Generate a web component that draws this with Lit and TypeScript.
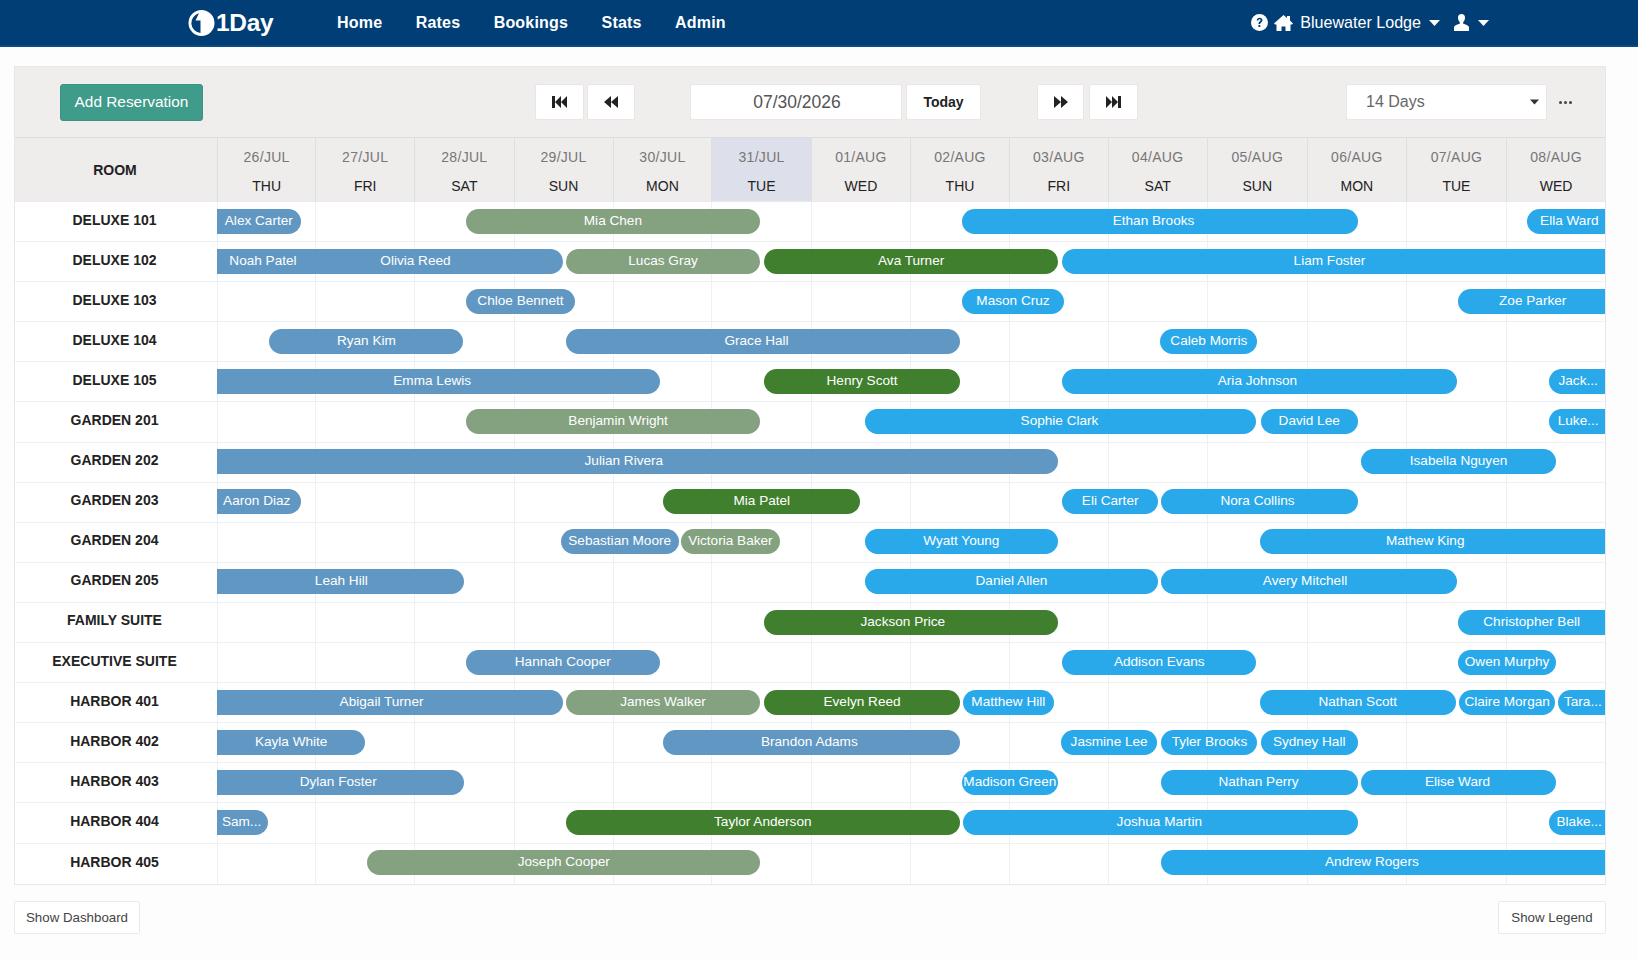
import { LitElement, html, css, svg } from "lit";
import { customElement } from "lit/decorators.js";

const K = 1638 / 1568;
const LANE = 208;
type Bar = [string, number, number, string, number?];
// colour: b slate blue, s sage, g green, c bright blue. flag: 1 open left, 2 open right
const ROWS: [string, Bar[]][] = [
  ["DELUXE 101", [["Alex Carter", 208, 288, "b", 1], ["Mia Chen", 446, 728, "s"], ["Ethan Brooks", 921, 1300, "c"], ["Ella Ward", 1462, 1537, "c", 2]]],
  ["DELUXE 102", [["Olivia Reed", 257, 539, "b"], ["Noah Patel", 208, 296, "b", 3], ["Lucas Gray", 542, 728, "s"], ["Ava Turner", 732, 1013, "g"], ["Liam Foster", 1017, 1537, "c", 2]]],
  ["DELUXE 103", [["Chloe Bennett", 446, 551, "b"], ["Mason Cruz", 921, 1019, "c"], ["Zoe Parker", 1396, 1537, "c", 2]]],
  ["DELUXE 104", [["Ryan Kim", 258, 444, "b"], ["Grace Hall", 542, 919, "b"], ["Caleb Morris", 1111, 1204, "c"]]],
  ["DELUXE 105", [["Emma Lewis", 208, 632, "b", 1], ["Henry Scott", 732, 919, "g"], ["Aria Johnson", 1017, 1395, "c"], ["Jack...", 1483, 1537, "c", 2]]],
  ["GARDEN 201", [["Benjamin Wright", 446, 728, "s"], ["Sophie Clark", 828, 1203, "c"], ["David Lee", 1207, 1300, "c"], ["Luke...", 1483, 1537, "c", 2]]],
  ["GARDEN 202", [["Julian Rivera", 208, 1013, "b", 1], ["Isabella Nguyen", 1303, 1490, "c"]]],
  ["GARDEN 203", [["Aaron Diaz", 208, 288, "b", 1], ["Mia Patel", 635, 824, "g"], ["Eli Carter", 1017, 1109, "c"], ["Nora Collins", 1112, 1300, "c"]]],
  ["GARDEN 204", [["Sebastian Moore", 537, 650, "b"], ["Victoria Baker", 652, 747, "s"], ["Wyatt Young", 828, 1013, "c"], ["Mathew King", 1206, 1537, "c", 2]]],
  ["GARDEN 205", [["Leah Hill", 208, 444, "b", 1], ["Daniel Allen", 828, 1109, "c"], ["Avery Mitchell", 1112, 1395, "c"]]],
  ["FAMILY SUITE", [["Jackson Price", 732, 1013, "g"], ["Christopher Bell", 1396, 1537, "c", 2]]],
  ["EXECUTIVE SUITE", [["Hannah Cooper", 446, 632, "b"], ["Addison Evans", 1017, 1203, "c"], ["Owen Murphy", 1396, 1490, "c"]]],
  ["HARBOR 401", [["Abigail Turner", 208, 539, "b", 1], ["James Walker", 542, 728, "s"], ["Evelyn Reed", 732, 919, "g"], ["Matthew Hill", 922, 1009, "c"], ["Nathan Scott", 1206, 1394, "c"], ["Claire Morgan", 1397, 1489, "c"], ["Tara...", 1492, 1537, "c", 2]]],
  ["HARBOR 402", [["Kayla White", 208, 350, "b", 1], ["Brandon Adams", 635, 919, "b"], ["Jasmine Lee", 1016, 1108, "c"], ["Tyler Brooks", 1112, 1204, "c"], ["Sydney Hall", 1207, 1300, "c"]]],
  ["HARBOR 403", [["Dylan Foster", 208, 444, "b", 1], ["Madison Green", 921, 1013, "c"], ["Nathan Perry", 1112, 1300, "c"], ["Elise Ward", 1303, 1490, "c"]]],
  ["HARBOR 404", [["Sam...", 208, 257, "b", 1], ["Taylor Anderson", 542, 919, "g"], ["Joshua Martin", 922, 1300, "c"], ["Blake...", 1483, 1537, "c", 2]]],
  ["HARBOR 405", [["Joseph Cooper", 352, 728, "s"], ["Andrew Rogers", 1112, 1537, "c", 2]]],
];
// how far a label sits from the centre of its bar, in pixels
const NUDGE: Record<string, number> = {
  "Ethan Brooks": -6, "Ella Ward": 3, "Liam Foster": -4, "Zoe Parker": 1, "Grace Hall": -6, "Emma Lewis": -6, "Aria Johnson": -2,
  "Benjamin Wright": 5, "Julian Rivera": -13, "Aaron Diaz": -2, "Nora Collins": -2, "Mathew King": -7, "Leah Hill": 1, "Avery Mitchell": -4,
  "Jackson Price": -8, "Abigail Turner": -8, "Brandon Adams": -2, "Dylan Foster": -2, "Sam...": -1, "Andrew Rogers": -11, "Blake...": 2,
  "Jack...": 1, "Luke...": 1, "Tara...": 1, "Sophie Clark": -1, "Nathan Perry": -1, "Elise Ward": -1, "Joshua Martin": -1,
};
const DAYS = [
  ["26/JUL", "THU"], ["27/JUL", "FRI"], ["28/JUL", "SAT"], ["29/JUL", "SUN"], ["30/JUL", "MON"], ["31/JUL", "TUE"], ["01/AUG", "WED"],
  ["02/AUG", "THU"], ["03/AUG", "FRI"], ["04/AUG", "SAT"], ["05/AUG", "SUN"], ["06/AUG", "MON"], ["07/AUG", "TUE"], ["08/AUG", "WED"],
];

const icon = (w: number, h: number, vb: string, body: unknown) =>
  html`<svg class="ic" width=${w} height=${h} viewBox=${vb} fill="currentColor">${body}</svg>`;
const first = icon(15, 12, "0 0 15 12", svg`<rect x="0" y="0" width="3" height="12"/><path d="M3 6 9 0v12zM9 6l6-6v12z"/>`);
const prev = icon(14, 12, "0 0 14 12", svg`<path d="M0 6 7 0v12zM7 6l7-6v12z"/>`);
const next = icon(14, 12, "0 0 14 12", svg`<path d="M14 6 7 0v12zM7 6 0 0v12z"/>`);
const last = icon(15, 12, "0 0 15 12", svg`<rect x="12" y="0" width="3" height="12"/><path d="M12 6 6 0v12zM6 6 0 0v12z"/>`);
const caret = icon(11, 6, "0 0 11 6", svg`<path d="M0 0h11L5.500 6z"/>`);

@customElement("app-root")
export class AppRoot extends LitElement {
  static styles = css`
    :host { display: block; width: 1638px; height: 960px; background: #fdfdfd; font-family: "Liberation Sans", Arial, sans-serif; color: #222; overflow: hidden; }
    .ic { display: block; flex: none; }
    .nav { height: 45px; background: #003e75; border-bottom: 2px solid #0b4a7f; display: flex; align-items: center; color: #fff; font-size: 16px; }
    .logo { display: flex; align-items: center; margin-left: 188px; width: 149px; font-size: 24.5px; font-weight: 700; letter-spacing: -0.3px; gap: 1px; }
    .links { display: flex; gap: 33.4px; font-weight: 700; font-size: 16px; letter-spacing: 0.2px; }
    .right { margin-left: auto; margin-right: 149px; display: flex; align-items: center; }
    .help { margin-right: 6px; }
    .house { margin-right: 7px; }
    .lodge { margin-right: 8px; font-size: 16.1px; }
    .user { margin-left: 14px; margin-right: 9px; }
    .panel { margin: 19px 32px 0 14px; border: 1px solid #e6e6ec; height: 819px; box-sizing: border-box; }
    .toolbar { height: 71px; background: #f0eded; border-bottom: 1px solid #dcdbdf; display: flex; align-items: center; box-sizing: border-box; padding-left: 45px; }
    .btn { height: 36px; background: #fff; border: 1px solid #e8e6e6; box-sizing: border-box; display: flex; align-items: center; justify-content: center; border-radius: 2px; color: #222; }
    .add { width: 143px; height: 37px; background: #3f9b8a; border-color: #3a9383; color: #fff; font-size: 15.4px; border-radius: 3px; margin-right: 332px; }
    .n1 { width: 49px; margin-right: 3px; }
    .n2 { width: 48px; margin-right: 55px; }
    .date { width: 212px; font-size: 17.5px; color: #555; margin-right: 4px; padding-left: 2px; }
    .today { width: 75px; font-size: 14px; font-weight: 700; margin-right: 56px; }
    .n3 { width: 47px; margin-right: 5px; }
    .n4 { width: 49px; margin-right: 208px; }
    .sel { width: 201px; justify-content: space-between; padding: 0 7px 0 19px; font-size: 16px; color: #666; }
    .sel .ic { color: #333; width: 9px; }
    .dots { margin-left: 12px; display: flex; gap: 2px; }
    .dots i { width: 3px; height: 3px; border-radius: 50%; background: #444; display: block; }
    .head { display: grid; grid-template-columns: 202px 98.3fr 99fr 99.5fr 99fr 98.9fr 99.5fr 99.4fr 98.9fr 98.9fr 98.9fr 100.5fr 98.8fr 100.5fr 98.9fr; height: 64px; background: #efecec; border-bottom: 1px solid #e9e8ec; box-sizing: border-box; }
    .rh { display: flex; align-items: center; justify-content: center; font-size: 14px; font-weight: 700; padding: 1px 2px 0 0; box-sizing: border-box; }
    .dh { border-left: 1px solid #dfdfe3; text-align: center; font-size: 14px; display: flex; flex-direction: column; align-items: center; padding-top: 10px; box-sizing: border-box; gap: 10px; line-height: 19px; }
    .dh.now { background: #dde0ea; }
    .dh b { font-weight: 400; color: #777; letter-spacing: 0.3px; }
    .dh span { color: #222; }
    .row { display: grid; grid-template-columns: 202px 1fr; height: 40.1px; border-bottom: 1px solid #eff0f4; box-sizing: border-box; background: #fff; }
    .row:last-child { border-bottom: 0; }
    .room { display: flex; align-items: center; justify-content: center; font-size: 14px; font-weight: 700; padding: 0 3px 4px 0; box-sizing: border-box; }
    .lane { position: relative; display: grid; grid-template-columns: 98.3fr 99fr 99.5fr 99fr 98.9fr 99.5fr 99.4fr 98.9fr 98.9fr 98.9fr 100.5fr 98.8fr 100.5fr 98.9fr; }
    .cell { border-left: 1px solid #eff0f4; }
    .bar { position: absolute; top: 6.6px; height: 25px; box-sizing: border-box; border-radius: 13px; color: #fff; font-size: 13.6px; line-height: 24px; text-align: center; white-space: nowrap; overflow: hidden; }
    .b { background: #6198c3; }
    .s { background: #84a180; }
    .g { background: #3f7f2e; }
    .c { background: #29a9ea; }
    .ol { border-top-left-radius: 0; border-bottom-left-radius: 0; }
    .or { border-top-right-radius: 0; border-bottom-right-radius: 0; }
    .foot { margin: 16px 32px 0 14px; display: flex; justify-content: space-between; }
    .fb { height: 33px; background: #fff; border: 1px solid #e8e9ee; border-radius: 2px; box-sizing: border-box; display: flex; align-items: center; justify-content: center; font-size: 13.3px; color: #444; }
    .fb.d { width: 126px; }
    .fb.l { width: 108px; }
  `;

  render() {
    return html`
      <div class="nav">
        <div class="logo">
          <svg class="ic" width="27" height="26" viewBox="0 0 27 26"><path fill="#fff" fill-rule="evenodd" d="M13.500 0a13 13 0 1 1 0 26 13 13 0 0 1 0-26zM11 3.300A10 10 0 0 0 12.500 23V10.500H7.500z"/></svg>
          <span>1Day</span>
        </div>
        <div class="links"><span>Home</span><span>Rates</span><span>Bookings</span><span>Stats</span><span>Admin</span></div>
        <div class="right">
          <svg class="ic help" width="17" height="17" viewBox="0 0 16 16"><circle cx="8" cy="8" r="8" fill="#fff"/><path d="M5.300 6.200C5.400 4.500 6.600 3.500 8.100 3.500c1.600 0 2.700 1 2.700 2.300 0 2-2.100 2-2.100 3.700H7c0-2.500 2-2.500 2-3.600 0-.6-.4-1-1-1-.7 0-1 .5-1.100 1.300z" fill="#003e75"/><rect x="7" y="10.300" width="1.800" height="1.900" fill="#003e75"/></svg>
          <svg class="ic house" width="19" height="16" viewBox="0 0 19 16" fill="#fff"><path d="M9.500 0 13 3V1h3v4.600L19 8.400 18 9.500h-1.500V16h-5v-4.500h-4V16h-5V9.500H1L0 8.400z"/></svg>
          <span class="lodge">Bluewater Lodge</span>
          ${caret}
          <svg class="ic user" width="15" height="17" viewBox="0 0 15 17" fill="#fff"><path d="M7.500 0c2.200 0 3.500 1.400 3.500 3.500 0 1.900-.8 3.700-1.800 4.700v1.600c3 1 5.800 1.700 5.800 3.700V17H0v-3.500c0-2 2.800-2.700 5.800-3.700V8.200C4.800 7.200 4 5.400 4 3.500 4 1.400 5.300 0 7.500 0z"/></svg>
          ${caret}
        </div>
      </div>
      <div class="panel">
        <div class="toolbar">
          <div class="btn add">Add Reservation</div>
          <div class="btn n1">${first}</div>
          <div class="btn n2">${prev}</div>
          <div class="btn date">07/30/2026</div>
          <div class="btn today">Today</div>
          <div class="btn n3">${next}</div>
          <div class="btn n4">${last}</div>
          <div class="btn sel"><span>14 Days</span>${caret}</div>
          <div class="dots"><i></i><i></i><i></i></div>
        </div>
        <div class="head">
          <div class="rh">ROOM</div>
          ${DAYS.map((d, i) => html`<div class="dh ${i === 5 ? "now" : ""}"><b>${d[0]}</b><span>${d[1]}</span></div>`)}
        </div>
        ${ROWS.map(([room, bars]) => html`
          <div class="row">
            <div class="room">${room}</div>
            <div class="lane">
              ${DAYS.map(() => html`<div class="cell"></div>`)}
              ${bars.map(([name, a, b, col, f]) => {
                const n = (NUDGE[name] ?? 0) * K * 2;
                const pad = n > 0 ? `padding-left:${n.toFixed(1)}px` : n < 0 ? `padding-right:${(-n).toFixed(1)}px` : "";
                return html`<div
                  class="bar ${col} ${f === 1 || f === 3 ? "ol" : ""} ${f === 2 || f === 3 ? "or" : ""}"
                  style="left:${((a - LANE) * K).toFixed(1)}px;width:${((b - a) * K).toFixed(1)}px;${pad}">${name}</div>`;
              })}
            </div>
          </div>`)}
      </div>
      <div class="foot">
        <div class="fb d">Show Dashboard</div>
        <div class="fb l">Show Legend</div>
      </div>
    `;
  }
}
